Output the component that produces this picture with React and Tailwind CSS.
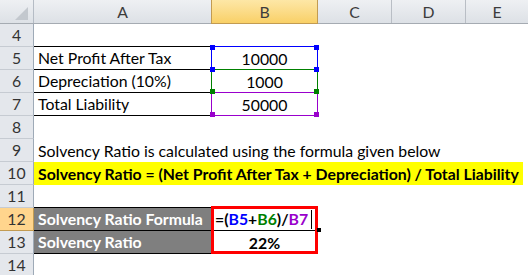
import React from 'react'

function RowHead({ n, active }) {
  return (
    <div
      className={
        active
          ? 'w-[34px] shrink-0 flex items-center justify-center border-r border-b border-[#c29b52] bg-[#ffd58d] text-[#333]'
          : 'w-[34px] shrink-0 flex items-center justify-center border-r border-b border-r-[#9eaab7] border-b-[#c6cbd2] bg-[#e4e7ec] text-[#333]'
      }
    >
      {n}
    </div>
  )
}

function Row({ n, active, children }) {
  return (
    <div className="flex h-[23px]">
      <RowHead n={n} active={active} />
      {children}
    </div>
  )
}

function Handle({ className }) {
  return <div className={`absolute z-10 w-[5px] h-[5px] ${className}`} />
}

export default function App() {
  return (
    <div className="w-[528px] h-[275px] overflow-hidden bg-white text-black text-[15.8px] font-['Lato','Liberation_Sans',sans-serif]">
      {/* column headers */}
      <div className="flex h-[24px] border-b border-[#a5abb2] bg-gradient-to-b from-[#eef0f3] to-[#dde1e6] text-[#3c3c3c]">
        <div className="w-[34px] shrink-0 border-r border-[#b5bcc5] relative">
          <svg className="absolute left-0 top-0" width="34" height="23" viewBox="0 0 34 23">
            <polygon points="28,7 28,20 15,20" fill="#c3c8ce" />
          </svg>
        </div>
        <div className="w-[177px] shrink-0 flex items-center justify-center">A</div>
        <div className="w-[107px] shrink-0 flex items-center justify-center border-x border-[#c29b52] bg-gradient-to-b from-[#fde7a6] to-[#f9d066] -mb-px border-b">B</div>
        <div className="w-[74px] shrink-0 flex items-center justify-center border-r border-[#b9bec5]">C</div>
        <div className="w-[74px] shrink-0 flex items-center justify-center border-r border-[#b9bec5]">D</div>
        <div className="flex-1 flex items-center justify-center">E</div>
      </div>

      <Row n={4}>
        <div className="w-[177px] shrink-0 border-b border-black" />
      </Row>

      <Row n={5}>
        <div className="w-[177px] shrink-0 border-b border-black flex items-center pl-[4px] whitespace-nowrap">Net Profit After Tax</div>
        <div className="w-[107px] shrink-0 relative flex items-center justify-center">
          <div className="absolute left-0 right-0 -top-px bottom-0 border border-[#0000ff]" />
          <Handle className="-left-px -top-[2px] bg-[#0000ff]" />
          <Handle className="-right-px -top-[2px] bg-[#0000ff]" />
          <Handle className="-left-px top-[20px] bg-[#0000ff]" />
          <Handle className="-right-px top-[20px] bg-[#0000ff]" />
          10000
        </div>
      </Row>

      <Row n={6}>
        <div className="w-[177px] shrink-0 border-b border-black flex items-center pl-[4px] whitespace-nowrap">Depreciation (10%)</div>
        <div className="w-[107px] shrink-0 relative flex items-center justify-center">
          <div className="absolute left-0 right-0 -top-px bottom-0 border border-[#008000]" />
          <Handle className="-left-px top-[19px] bg-[#008000]" />
          <Handle className="-right-px top-[19px] bg-[#008000]" />
          1000
        </div>
      </Row>

      <Row n={7}>
        <div className="w-[177px] shrink-0 border-b border-black flex items-center pl-[4px] whitespace-nowrap">Total Liability</div>
        <div className="w-[107px] shrink-0 relative flex items-center justify-center">
          <div className="absolute left-0 right-0 -top-px bottom-0 border border-[#9900cc]" />
          <Handle className="-left-px top-[19px] bg-[#9900cc]" />
          <Handle className="-right-px top-[19px] bg-[#9900cc]" />
          50000
        </div>
      </Row>

      <Row n={8} />

      <Row n={9}>
        <div className="w-[177px] shrink-0 flex items-center pl-[4px] whitespace-nowrap">
          Solvency Ratio is calculated using the formula given below
        </div>
      </Row>

      <Row n={10}>
        <div className="w-[489px] shrink-0 bg-[#ffff00] flex items-center pl-[4px] whitespace-nowrap font-bold">
          Solvency Ratio = (Net Profit After Tax + Depreciation) / Total Liability
        </div>
      </Row>

      <Row n={11}>
        <div className="w-[177px] shrink-0 border-b border-black" />
      </Row>

      <Row n={12} active>
        <div className="w-[177px] shrink-0 bg-[#7f7f7f] border-b border-black text-white font-bold flex items-center pl-[4px] whitespace-nowrap">
          Solvency Ratio Formula
        </div>
        <div className="w-[107px] shrink-0 relative border-b border-black flex items-center pl-[4px] font-bold whitespace-nowrap">
          <span>=(</span>
          <span className="text-[#0000ff]">B5</span>
          <span>+</span>
          <span className="text-[#008000]">B6</span>
          <span>)/</span>
          <span className="text-[#9900cc]">B7</span>
          <span className="ml-[3px] w-px h-[19px] bg-black" />
          <div className="absolute z-20 left-0 right-0 -top-[2px] h-[48px] border-[3px] border-[#ff0000]" />
          <div className="absolute z-30 -right-[3px] top-[20px] w-[4px] h-[4px] bg-black" />
        </div>
      </Row>

      <Row n={13}>
        <div className="w-[177px] shrink-0 bg-[#7f7f7f] border-b border-black text-white font-bold flex items-center pl-[4px] whitespace-nowrap">
          Solvency Ratio
        </div>
        <div className="w-[107px] shrink-0 flex items-center justify-center font-bold">22%</div>
      </Row>

      <Row n={14} />
    </div>
  )
}
